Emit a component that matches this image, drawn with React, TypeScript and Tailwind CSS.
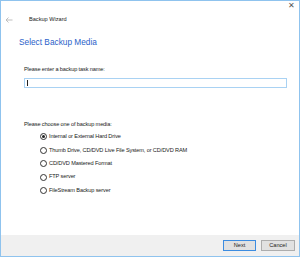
import { useState } from "react";

const options = [
  "Internal or External Hard Drive",
  "Thumb Drive, CD/DVD Live File System, or CD/DVD RAM",
  "CD/DVD Mastered Format",
  "FTP server",
  "FileStream Backup server",
];

export default function App() {
  const [media, setMedia] = useState(0);

  return (
    <div
      className="w-[300px] h-[257px] bg-white border border-[#8fc3ee] flex flex-col text-[#1a1a1a]"
      style={{ fontFamily: '"Liberation Sans", Arial, sans-serif' }}
    >
      {/* title bar */}
      <div className="relative h-[12px]">
        <span className="absolute right-[4px] top-[1px] text-[8px] leading-none text-[#555]">✕</span>
      </div>
      <div className="flex items-center h-[14px]">
        <svg width="8" height="6" viewBox="0 0 8 6" className="ml-[4px]">
          <path d="M7.5 3H1M3.5 0.5L1 3l2.5 2.5" fill="none" stroke="#b8b8b8" strokeWidth="0.9" />
        </svg>
        <span className="ml-[16px] text-[5.6px] leading-none">Backup Wizard</span>
      </div>

      {/* body */}
      <div className="flex-1 flex flex-col">
        <h1 className="ml-[18px] mt-[11px] text-[8.3px] leading-none text-[#2a62c9]">Select Backup Media</h1>

        <p className="ml-[23px] mt-[21px] text-[5.6px] leading-none tracking-[-0.12px]">Please enter a backup task name:</p>
        <div className="ml-[23px] mr-[12px] mt-[5px] h-[10px] border border-[#a9d2f3] flex items-center pl-[2px]">
          <div className="w-px h-[6px] bg-[#222]" />
        </div>

        <p className="ml-[23px] mt-[34px] text-[5.6px] leading-none tracking-[-0.12px]">Please choose one of backup media:</p>
        <div className="ml-[39px] mt-[6px] flex flex-col gap-[6.4px]">
          {options.map((o, i) => (
            <label key={o} className="flex items-center gap-[2px] cursor-default" onClick={() => setMedia(i)}>
              <span className="w-[7px] h-[7px] rounded-full border-[0.8px] border-[#333] flex items-center justify-center bg-white">
                {media === i && <span className="w-[3px] h-[3px] rounded-full bg-[#222]" />}
              </span>
              <span className="text-[5.6px] leading-none tracking-[-0.12px]">{o}</span>
            </label>
          ))}
        </div>
      </div>

      {/* footer */}
      <div className="h-[21px] bg-[#f0f0f0] flex items-center justify-end gap-[5px] pr-[4px]">
        <button className="w-[33px] h-[11px] bg-[#e1e1e1] border border-[#3c8ce0] text-[5.6px] leading-none">Next</button>
        <button className="w-[34px] h-[11px] bg-[#e1e1e1] border border-[#adadad] text-[5.6px] leading-none">Cancel</button>
      </div>
    </div>
  );
}
